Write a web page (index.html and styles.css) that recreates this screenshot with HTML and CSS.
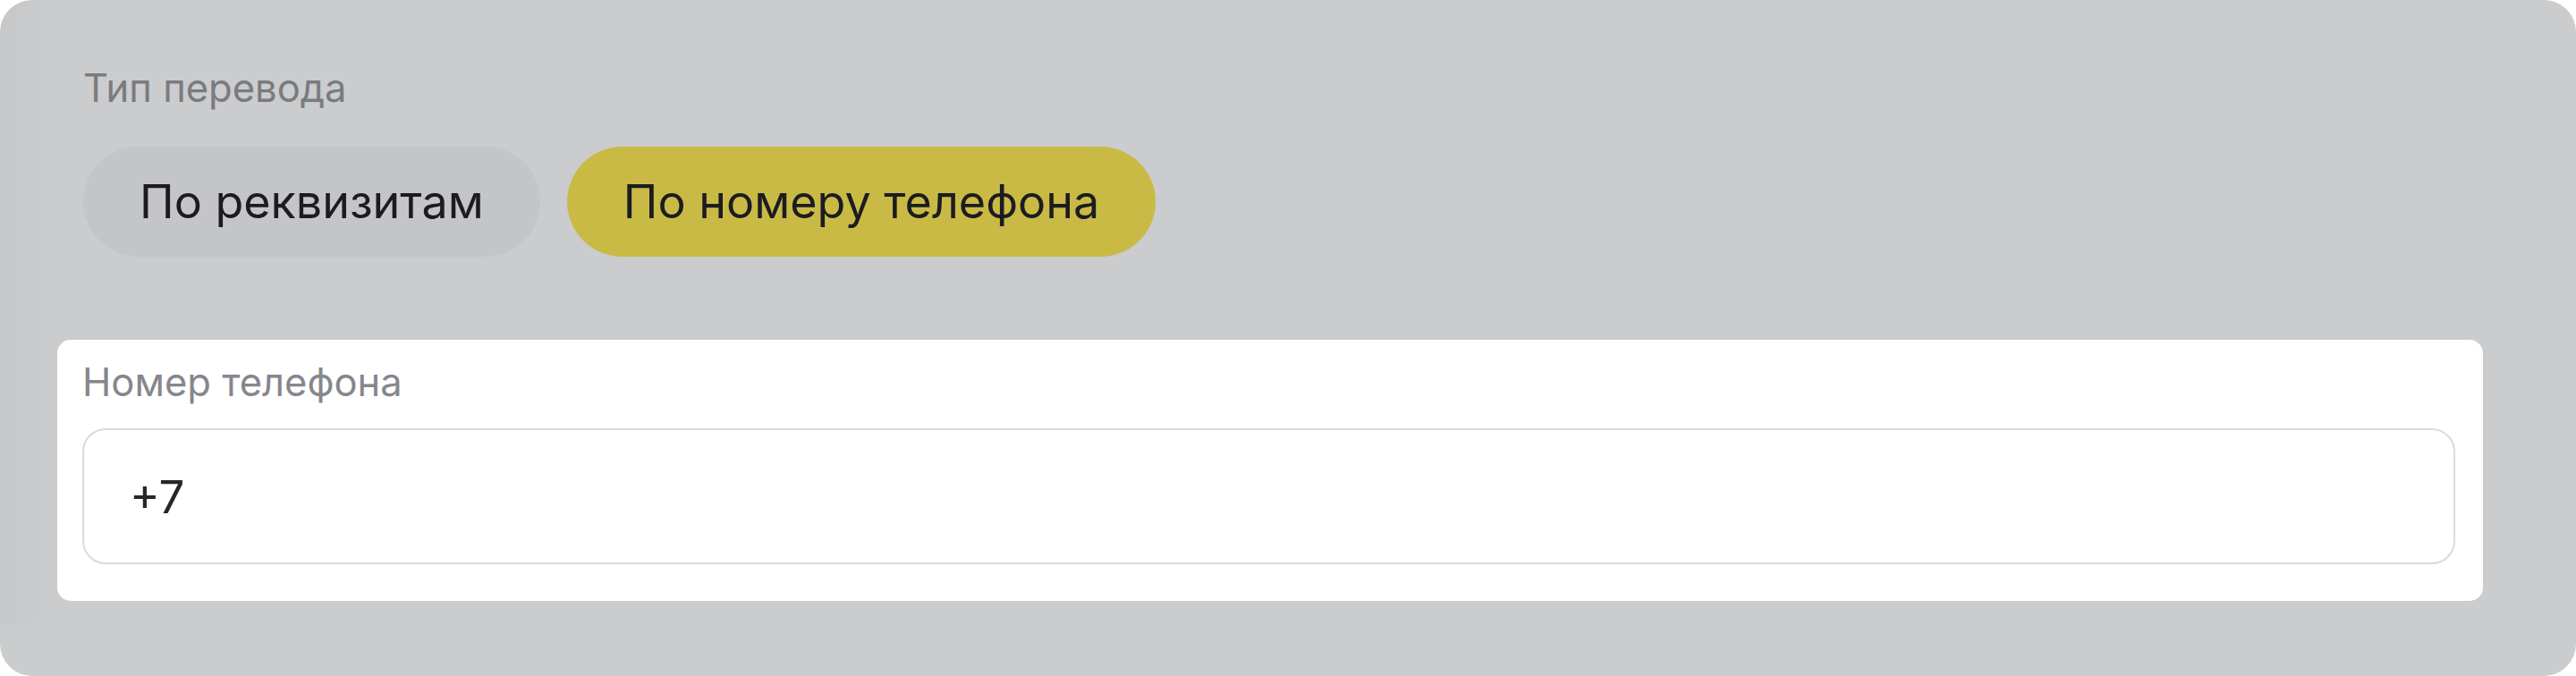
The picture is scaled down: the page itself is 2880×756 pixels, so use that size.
FILE: index.html
```html
<!DOCTYPE html>
<html lang="ru">
<head>
<meta charset="utf-8">
<title>Тип перевода</title>
<link rel="stylesheet" href="styles.css">
</head>
<body>
<div class="panel">
  <section class="type-section">
    <div class="label">Тип перевода</div>
    <div class="pills">
      <button class="pill">По реквизитам</button>
      <button class="pill pill-active">По номеру телефона</button>
    </div>
  </section>
  <section class="card">
    <div class="label card-label">Номер телефона</div>
    <div class="input">+7</div>
  </section>
</div>
</body>
</html>
```
FILE: styles.css
```css
html, body {
  margin: 0;
  padding: 0;
  background: #ffffff;
}

body {
  font-family: Inter, "Noto Sans", Arial, sans-serif;
}

.panel {
  box-sizing: border-box;
  height: 756px;
  border-radius: 36px;
  background-color: #cbcccd;
  background-image: linear-gradient(90deg, rgba(0, 0, 0, 0.025), rgba(0, 0, 0, 0) 70px);
  background-size: 120px 697px;
  background-repeat: no-repeat;
  padding: 0 104px 0 64px;
  display: flex;
  flex-direction: column;
}

.type-section {
  padding: 77px 29px 0;
}

.label {
  font-size: 43.5px;
  line-height: 42px;
  color: #7a7b80;
  white-space: nowrap;
}

.pills {
  display: flex;
  gap: 30px;
  margin-top: 45px;
}

.pill {
  box-sizing: border-box;
  height: 123px;
  padding: 0 63px;
  border: none;
  border-radius: 62px;
  background: #c4c5c7;
  color: #1c1c20;
  font-family: inherit;
  font-size: 52px;
  line-height: 1;
  display: inline-flex;
  align-items: center;
  white-space: nowrap;
}

.pill-active {
  background: #c9ba46;
}

.card {
  box-sizing: border-box;
  margin-top: 93px;
  height: 292px;
  background: #ffffff;
  border-radius: 15px;
  padding: 26px 31px 0 28px;
}

.card-label {
  color: #86868d;
}

.input {
  box-sizing: border-box;
  margin-top: 31px;
  height: 152px;
  border: 2px solid #dadada;
  border-radius: 26px;
  padding: 0 51px;
  display: flex;
  align-items: center;
  font-size: 51px;
  color: #26262c;
}
```
